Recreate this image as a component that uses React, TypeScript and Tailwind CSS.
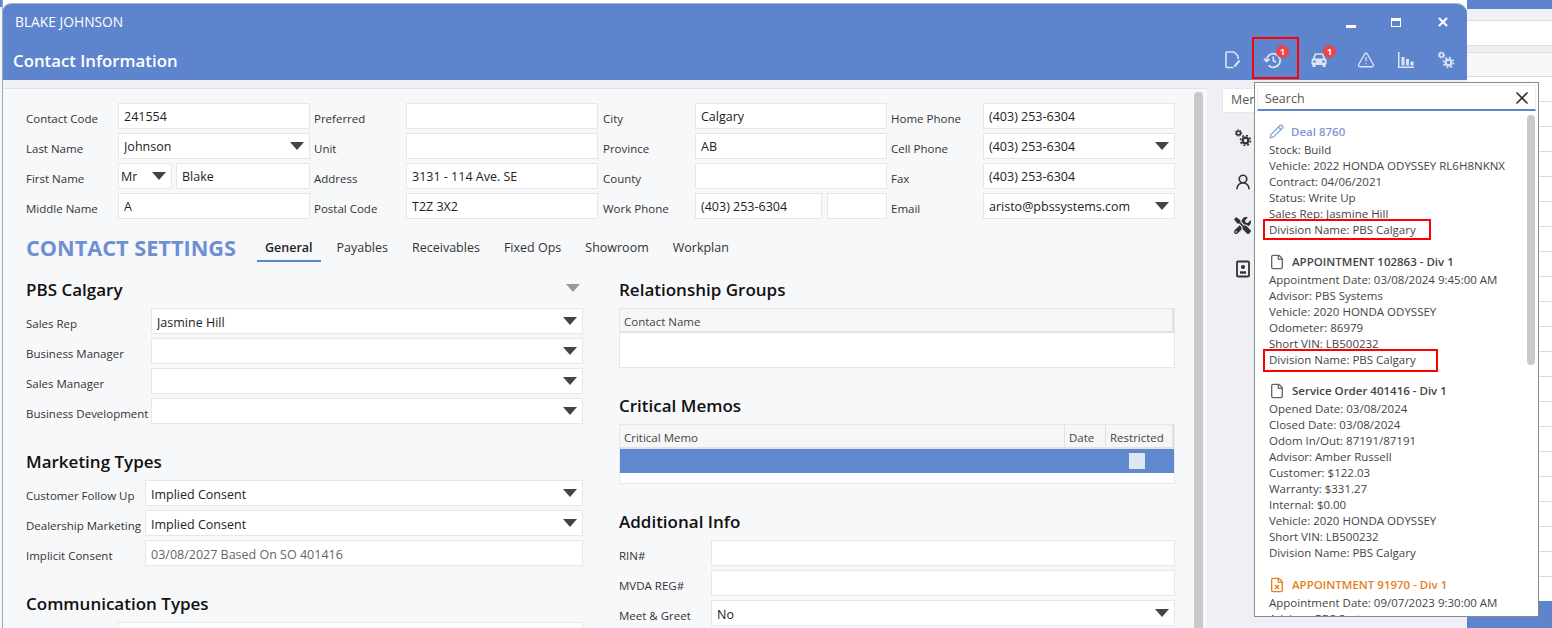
import { ReactNode } from "react";
import { File, FileX, Pencil, TriangleAlert, UserRound, X } from "lucide-react";
import { FaTools } from "react-icons/fa";

const Caret = ({ grey }: { grey?: boolean }) => (
  <svg width="14" height="8" viewBox="0 0 14 8" className="shrink-0">
    <polygon points="0,0 14,0 7,8" fill={grey ? "#9a9a9a" : "#444444"} />
  </svg>
);

const Gears = ({ color, size = 18 }: { color: string; size?: number }) => (
  <svg width={size} height={size} viewBox="0 0 18 18" fill="none" stroke={color}>
    <circle cx="4.5" cy="4" r="2" strokeWidth="1.6" />
    <circle cx="4.5" cy="4" r="3.2" strokeWidth="1" strokeDasharray="1.5 1.2" />
    <circle cx="11.5" cy="11.5" r="2.8" strokeWidth="2.2" />
    <circle cx="11.5" cy="11.5" r="5" strokeWidth="1.6" strokeDasharray="2 1.9" />
  </svg>
);

const Box = ({
  children,
  className = "",
  caret,
  muted,
  low,
}: {
  children?: ReactNode;
  className?: string;
  caret?: boolean;
  muted?: boolean;
  low?: boolean;
}) => (
  <div
    className={`h-[26px] bg-white border border-[#e6e7ea] flex items-center justify-between pl-[5px] pr-[5px] text-[12.5px] ${
      muted ? "text-[#666666]" : "text-[#222222]"
    } ${className}`}
  >
    <span className={`truncate ${low ? "mt-[4px]" : "mt-[2px]"}`}>{children}</span>
    {caret && <Caret />}
  </div>
);

const Label = ({ children, className = "" }: { children: ReactNode; className?: string }) => (
  <div className={`shrink-0 text-[11.5px] text-[#333333] pt-[6px] whitespace-nowrap ${className}`}>{children}</div>
);

const Field = ({ label, children, w = "w-[92px]" }: { label: string; children: ReactNode; w?: string }) => (
  <div className="flex items-center h-[26px]">
    <Label className={w}>{label}</Label>
    {children}
  </div>
);

const Heading = ({ children }: { children: ReactNode }) => (
  <div className="h-[24px] mb-[6px] flex items-center justify-between text-[17px] leading-[24px] font-semibold text-[#111111]">
    {children}
  </div>
);

const sections = [
  {
    icon: <Pencil size={15} color="#7fa3dc" strokeWidth={2} />,
    title: "Deal 8760",
    color: "text-[#7f97d8]",
    gap: "mb-[13px]",
    lines: [
      "Stock: Build",
      "Vehicle: 2022 HONDA ODYSSEY RL6H8NKNX",
      "Contract: 04/06/2021",
      "Status: Write Up",
      "Sales Rep: Jasmine Hill",
      "Division Name: PBS Calgary",
    ],
  },
  {
    icon: <File size={16} color="#666666" strokeWidth={2} />,
    title: "APPOINTMENT 102863 - Div 1",
    color: "text-[#444444]",
    gap: "mb-[12px]",
    lines: [
      "Appointment Date: 03/08/2024 9:45:00 AM",
      "Advisor: PBS Systems",
      "Vehicle: 2020 HONDA ODYSSEY",
      "Odometer: 86979",
      "Short VIN: LB500232",
      "Division Name: PBS Calgary",
    ],
  },
  {
    icon: <File size={16} color="#666666" strokeWidth={2} />,
    title: "Service Order 401416 - Div 1",
    color: "text-[#444444]",
    gap: "mb-[13px]",
    lines: [
      "Opened Date: 03/08/2024",
      "Closed Date: 03/08/2024",
      "Odom In/Out: 87191/87191",
      "Advisor: Amber Russell",
      "Customer: $122.03",
      "Warranty: $331.27",
      "Internal: $0.00",
      "Vehicle: 2020 HONDA ODYSSEY",
      "Short VIN: LB500232",
      "Division Name: PBS Calgary",
    ],
  },
  {
    icon: <FileX size={16} color="#e67e22" strokeWidth={2} />,
    title: "APPOINTMENT 91970 - Div 1",
    color: "text-[#e67e22]",
    gap: "mb-[13px]",
    lines: ["Appointment Date: 09/07/2023 9:30:00 AM", "Advisor: PBS Systems"],
  },
];

const stripRows = [
  "h-[21px] bg-[#f0f1f4]",
  "h-[25px] bg-white",
  "h-[7px] bg-[#eceef2]",
  "h-[24px] bg-[#f8f8f8]",
  ...Array.from({ length: 21 }, () => "h-[25px] bg-white"),
];

const Badge = () => (
  <span className="absolute -top-[6px] -right-[8px] w-[13px] h-[13px] rounded-full bg-[#ef4444] text-white text-[9px] font-bold leading-[13px] text-center">
    1
  </span>
);

export default function App() {
  return (
    <div className="relative w-[1552px] h-[628px] overflow-hidden flex bg-white font-['Open_Sans',sans-serif]">
      <div className="w-[3px] h-full bg-[#f6f6f6] border-r border-[#9aa8c0]">
        <div className="h-[7px] bg-[#5d84cc]" />
      </div>

      {/* window */}
      <div className="w-[1464px] h-[625px] mt-[3px] rounded-tl-[8px] rounded-tr-[10px] overflow-hidden flex flex-col shrink-0 bg-[#eff0f5] border-t border-[#a4b8dd]">
        <div className="bg-[#5d84cc] h-[76px] shrink-0 text-white">
          <div className="h-[36px] flex items-center justify-between pl-[12px]">
            <span className="text-[13.8px] mt-[1px]">BLAKE JOHNSON</span>
            <div className="flex items-center gap-[35px] pr-[17px]">
              <div className="w-[10px] h-[3px] bg-white mt-[8px]" />
              <div className="w-[10px] h-[9px] border border-white border-t-[3px]" />
              <X size={14} strokeWidth={3.5} color="white" />
            </div>
          </div>
          <div className="h-[40px] flex items-center justify-between pl-[10px] pr-[12px]">
            <span className="text-[16.8px] font-semibold mt-[1px]">Contact Information</span>
            <div className="flex items-center gap-[22px]">
              <svg width="18" height="18" viewBox="0 0 18 18" fill="none" stroke="#dbe4f5" strokeWidth="1.6">
                <path d="M10.5 16.5H4a1 1 0 0 1-1-1V2a1 1 0 0 1 1-1h7l4 4v3" />
                <path d="M16.5 9.5l-5 6" strokeWidth="2" />
              </svg>
              <div className="relative">
                <svg width="18" height="18" viewBox="0 0 18 18" fill="none" stroke="#dbe4f5" strokeWidth="1.7">
                  <path d="M3.5 9.5a6.8 6.8 0 1 1 2.2 5" />
                  <path d="M1 7.5l2.5 3 3-2.5" />
                  <path d="M10.3 5.5v4.2l2.8 1.5" />
                </svg>
                <Badge />
              </div>
              <div className="relative ml-[7px]">
                <svg width="18" height="18" viewBox="0 0 18 18" fill="none">
                  <path d="M3.6 8l1.5-4.2a1 1 0 0 1 1-.8h5.8a1 1 0 0 1 1 .8L14.4 8" stroke="#dbe4f5" strokeWidth="1.7" />
                  <rect x="1.5" y="7.5" width="15" height="6.5" rx="1.5" fill="#dbe4f5" />
                  <rect x="3.2" y="9.5" width="2.6" height="2" fill="#5d84cc" />
                  <rect x="12.2" y="9.5" width="2.6" height="2" fill="#5d84cc" />
                  <rect x="2.5" y="14" width="3" height="2" fill="#dbe4f5" />
                  <rect x="12.5" y="14" width="3" height="2" fill="#dbe4f5" />
                </svg>
                <Badge />
              </div>
              <TriangleAlert size={18} color="#dbe4f5" strokeWidth={1.8} className="ml-[7px]" />
              <svg width="18" height="18" viewBox="0 0 18 18" fill="#dbe4f5">
                <path d="M1 1h1.5v14.5H17V17H1z" />
                <rect x="4.5" y="6" width="3" height="8.5" />
                <rect x="9" y="8" width="3" height="6.5" />
                <rect x="13.5" y="10.5" width="3" height="4" />
              </svg>
              <Gears color="#dbe4f5" />
            </div>
          </div>
        </div>

        <div className="flex-1 flex min-h-0">
          {/* main column */}
          <div className="w-[1204px] shrink-0 flex flex-col">
            <div className="h-[9px] shrink-0 bg-[#f0f1f4] border-b border-[#e2e3e7]" />
            <div className="flex-1 flex min-h-0 bg-[#f7f8fa]">
              <div className="w-[1191px] shrink-0 pl-[23px] pt-[14px] overflow-hidden">
                <div className="grid grid-cols-[288px_289px_288px_284px] gap-y-[4px]">
                  <Field label="Contact Code"><Box className="w-[192px]">241554</Box></Field>
                  <Field label="Preferred"><Box className="w-[192px]" /></Field>
                  <Field label="City"><Box className="w-[192px]">Calgary</Box></Field>
                  <Field label="Home Phone"><Box className="w-[192px]">(403) 253-6304</Box></Field>

                  <Field label="Last Name"><Box className="w-[192px]" caret>Johnson</Box></Field>
                  <Field label="Unit"><Box className="w-[192px]" /></Field>
                  <Field label="Province"><Box className="w-[192px]">AB</Box></Field>
                  <Field label="Cell Phone"><Box className="w-[192px]" caret>(403) 253-6304</Box></Field>

                  <Field label="First Name">
                    <div className="flex gap-[4px]">
                      <Box className="w-[54px] !pl-[2px]" caret>Mr</Box>
                      <Box className="w-[134px]">Blake</Box>
                    </div>
                  </Field>
                  <Field label="Address"><Box className="w-[192px]">3131 - 114 Ave. SE</Box></Field>
                  <Field label="County"><Box className="w-[192px]" /></Field>
                  <Field label="Fax"><Box className="w-[192px]">(403) 253-6304</Box></Field>

                  <Field label="Middle Name"><Box className="w-[192px]">A</Box></Field>
                  <Field label="Postal Code"><Box className="w-[192px]">T2Z 3X2</Box></Field>
                  <Field label="Work Phone">
                    <div className="flex gap-[5px]">
                      <Box className="w-[127px]">(403) 253-6304</Box>
                      <Box className="w-[60px]" />
                    </div>
                  </Field>
                  <Field label="Email"><Box className="w-[192px]" caret>aristo@pbssystems.com</Box></Field>
                </div>

                <div className="flex items-end h-[26px] mt-[17px]">
                  <div className="w-[231px] h-[26px] text-[21.7px] leading-[24px] font-bold text-[#6f8fd3] whitespace-nowrap">CONTACT SETTINGS</div>
                  <div className="flex gap-[8px] text-[12.5px] text-[#333333]">
                    <div className="px-[8px] pt-[3px] h-[26px] border-b-2 border-[#5d84cc] font-semibold text-[#222222]">General</div>
                    <div className="px-[8px] pt-[3px] h-[26px]">Payables</div>
                    <div className="px-[8px] pt-[3px] h-[26px]">Receivables</div>
                    <div className="px-[8px] pt-[3px] h-[26px]">Fixed Ops</div>
                    <div className="px-[8px] pt-[3px] h-[26px]">Showroom</div>
                    <div className="px-[8px] pt-[3px] h-[26px]">Workplan</div>
                  </div>
                </div>

                <div className="flex gap-[36px] mt-[16px]">
                  <div className="w-[557px] shrink-0">
                    <Heading>
                      PBS Calgary
                      <span className="mr-[3px] -mt-[4px]"><Caret grey /></span>
                    </Heading>
                    <div className="flex flex-col gap-[4px]">
                      <Field label="Sales Rep" w="w-[125px]"><Box className="w-[432px]" caret low>Jasmine Hill</Box></Field>
                      <Field label="Business Manager" w="w-[125px]"><Box className="w-[432px]" caret /></Field>
                      <Field label="Sales Manager" w="w-[125px]"><Box className="w-[432px]" caret /></Field>
                      <Field label="Business Development" w="w-[125px]"><Box className="w-[432px]" caret /></Field>
                    </div>

                    <div className="mt-[26px]">
                      <Heading>Marketing Types</Heading>
                      <div className="flex flex-col gap-[4px]">
                        <Field label="Customer Follow Up" w="w-[119px]"><Box className="w-[438px]" caret low>Implied Consent</Box></Field>
                        <Field label="Dealership Marketing" w="w-[119px]"><Box className="w-[438px]" caret low>Implied Consent</Box></Field>
                        <Field label="Implicit Consent" w="w-[119px]"><Box className="w-[438px]" muted low>03/08/2027 Based On SO 401416</Box></Field>
                      </div>
                    </div>

                    <div className="mt-[26px]">
                      <Heading>Communication Types</Heading>
                      <Field label=""><Box className="w-[465px]" /></Field>
                    </div>
                  </div>

                  <div className="w-[556px] shrink-0">
                    <Heading>Relationship Groups</Heading>
                    <div className="h-[60px] bg-white border border-[#e6e7ea]">
                      <div className="h-[24px] bg-[#f6f6f6] border-b-2 border-r-2 border-[#e2e2e4] pl-[4px] text-[11.5px] leading-[26px] text-[#444444]">Contact Name</div>
                    </div>

                    <div className="mt-[26px]">
                      <Heading>Critical Memos</Heading>
                      <div className="h-[60px] bg-white border border-[#e6e7ea]">
                        <div className="h-[24px] flex bg-[#f6f6f6] border-b-2 border-r-2 border-[#e2e2e4] text-[11.5px] leading-[26px] text-[#444444]">
                          <div className="w-[445px] pl-[4px] border-r border-[#e2e2e4]">Critical Memo</div>
                          <div className="w-[41px] pl-[4px] border-r border-[#e2e2e4]">Date</div>
                          <div className="flex-1 pl-[4px]">Restricted</div>
                        </div>
                        <div className="h-[24px] bg-[#6088cf] flex justify-end items-center pr-[29px]">
                          <div className="w-[16px] h-[16px] bg-[#dfe6f4]" />
                        </div>
                      </div>
                    </div>

                    <div className="mt-[26px]">
                      <Heading>Additional Info</Heading>
                      <div className="flex flex-col gap-[4px]">
                        <Field label="RIN#"><Box className="w-[464px]" /></Field>
                        <Field label="MVDA REG#"><Box className="w-[464px]" /></Field>
                        <Field label="Meet &amp; Greet"><Box className="w-[464px]" caret low>No</Box></Field>
                      </div>
                    </div>
                  </div>
                </div>
              </div>
              <div className="w-[9px] shrink-0 pt-[3px]">
                <div className="h-full bg-[#c9c9c9] rounded-t-[4px]" />
              </div>
            </div>
          </div>

          {/* side column */}
          <div className="flex-1 pl-[15px] pt-[8px]">
            <div className="w-[60px] h-[25px] bg-white border border-[#e6e7ea] pl-[8px] text-[12.5px] leading-[22px] text-[#555555]">Menu</div>
            <div className="flex flex-col gap-[26px] mt-[16px] ml-[12px] text-[#333333]">
              <Gears color="#333333" size={18} />
              <UserRound size={18} strokeWidth={2.2} />
              <FaTools size={17} />
              <svg width="18" height="18" viewBox="0 0 18 18" fill="none" stroke="#333333" strokeWidth="1.8">
                <rect x="3" y="1.5" width="12" height="15" rx="1" />
                <circle cx="9" cy="7" r="1.2" fill="#333333" />
                <path d="M6 12.5h6" strokeWidth="2.4" />
              </svg>
            </div>
          </div>
        </div>
      </div>

      <div className="flex-1 h-full relative">
        {stripRows.map((row, i) => (
          <div key={i} className={`${row} border-b border-[#dcdde0]`} />
        ))}
      </div>

      <div className="absolute left-[1467px] right-0 top-0 h-[9px] bg-[#5d84cc]" />
      <div className="absolute left-[1467px] right-0 top-[601px] bottom-0 bg-[#5d84cc]" />

      {/* history popup */}
      <div className="absolute left-[1254px] top-[82px] w-[285px] h-[535px] bg-white border border-[#8a8a8a] overflow-hidden">
        <div className="mx-[2px] mt-[2px] h-[26px] flex items-center justify-between border-t border-x border-[#eeeeee] border-b-2 border-b-[#5d84cc] pl-[7px] pr-[3px]">
          <span className="text-[12.5px] text-[#555555] mt-[3px]">Search</span>
          <X size={20} color="#333333" strokeWidth={2} />
        </div>
        <div className="pl-[14px] pt-[10px] text-[11.5px] leading-[16px] text-[#444444] whitespace-nowrap">
          {sections.map((s) => (
            <div key={s.title} className={s.gap}>
              <div className={`h-[21px] flex items-center gap-[7px] font-semibold ${s.color}`}>
                {s.icon}
                <span>{s.title}</span>
              </div>
              {s.lines.map((line, i) => (
                <div key={i}>{line}</div>
              ))}
            </div>
          ))}
        </div>
        <div className="absolute right-[3px] top-[32px] w-[8px] h-[250px] bg-[#c9c9c9] rounded-[4px]" />
      </div>

      {/* annotation boxes */}
      <div className="absolute left-[1252px] top-[37px] w-[47px] h-[42px] border-[2px] border-[#ff0000]" />
      <div className="absolute left-[1263px] top-[219px] w-[168px] h-[21px] border-[2px] border-[#ff0000]" />
      <div className="absolute left-[1263px] top-[349px] w-[175px] h-[23px] border-[2px] border-[#ff0000]" />
    </div>
  );
}
